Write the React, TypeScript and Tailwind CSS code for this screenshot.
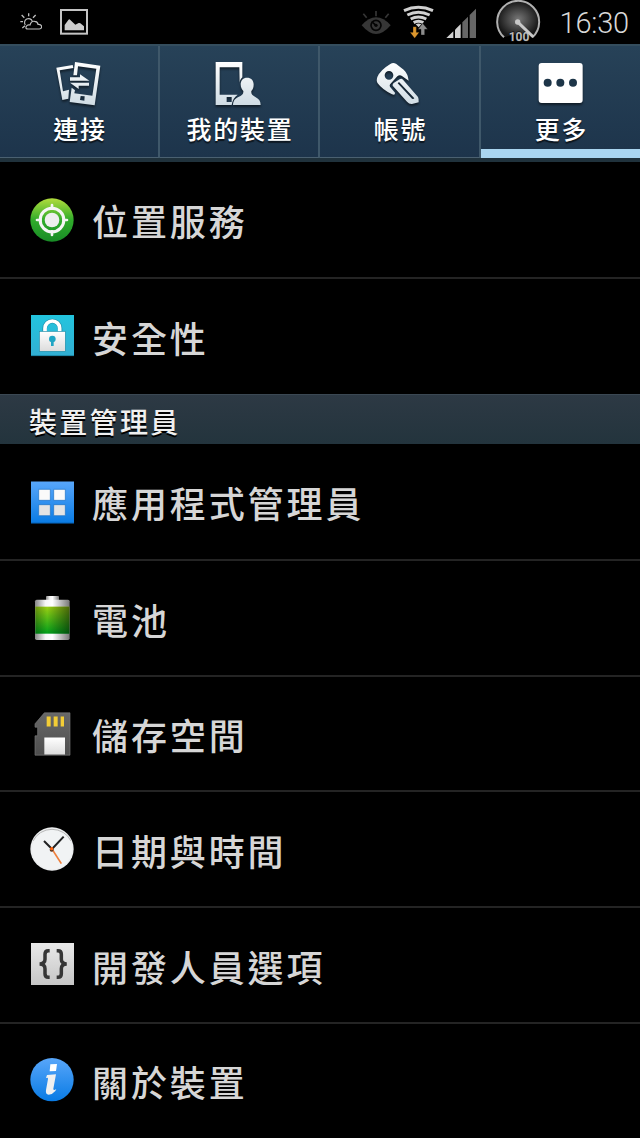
import React from "react";

const cjk = "font-['Noto_Sans_CJK_TC',sans-serif]";

function StatusBar() {
  return (
    <div className="flex h-11 shrink-0 items-center overflow-hidden bg-black pl-5">
      <svg className="h-11 w-[22px]" viewBox="60 0 66 132" fill="none" stroke="#bdbdbd" strokeWidth="3.5">
        <path d="M76 75 A12 12 0 1 1 97 64" />
        <path d="M86 40v9M65 45l8 8M107 45l-8 8M61 65h8M67 84l8-7" strokeWidth="4" />
        <path d="M84 87 Q75 87 79 79 Q82 73 90 75 Q94 62 104 64 Q113 65 114 73 Q124 72 125 80 Q125 87 118 87Z" />
      </svg>
      <svg className="ml-[18px] h-11 w-7" viewBox="180 0 84 132">
        <rect x="183" y="30" width="78" height="71" fill="none" stroke="#c4c4c4" strokeWidth="6" />
        <path d="M194 91V75L205 60q3-4 6 0l15 14 10-5q3-1 5 1l11 9v12z" fill="#cdcdcd" />
      </svg>

      <svg className="ml-[273px] h-11 w-[30px]" viewBox="63 0 90 132" fill="none" stroke="#363636">
        <path d="M70 41l10 12M108 33v16M146 41l-10 12" strokeWidth="5" />
        <path d="M65 76 Q86 52 108 52 Q131 52 152 76 Q130 102 108 102 Q87 102 65 76Z" fill="#363636" stroke="none" />
        <circle cx="108" cy="76" r="15" stroke="#050505" strokeWidth="5" />
        <path d="M95 65l13 11" stroke="#050505" strokeWidth="5" />
        <circle cx="108" cy="76" r="5" fill="#050505" stroke="none" />
      </svg>
      <svg className="ml-[11px] h-11 w-[33px]" viewBox="186 0 99 132">
        <g fill="none" stroke="#d0d0d0" strokeWidth="9">
          <path d="M192 32Q235 12 279 32" />
          <path d="M202 45Q235 29 269 45" />
          <path d="M212 57Q235 45 259 57" />
          <path d="M221 68Q235 60 250 68" />
        </g>
        <path d="M227 73q8-5 17 0l-8 9z" fill="#d0d0d0" />
        <path d="M219 80h10v17h9l-14 18-14-18h9z" fill="#dc962d" stroke="#000" strokeWidth="1" />
        <path d="M243 105h11V88h9l-15-18-14 18h9z" fill="#8c8c8c" stroke="#000" strokeWidth="1" />
      </svg>
      <svg className="ml-[11px] h-11 w-[30px]" viewBox="318 0 90 132">
        <path d="M319 114L340 94V114z" fill="#d2d2d2" />
        <path d="M345 114V89L362 72V114z" fill="#d2d2d2" />
        <path d="M367 114V67L384 50V114zM389 114V45L408 26V114z" fill="#666" />
      </svg>
      <svg className="ml-[19px] h-11 w-[47px]" viewBox="465 0 141 132">
        <defs>
          <radialGradient id="dial">
            <stop offset="0" stopColor="#777" />
            <stop offset="1" stopColor="#171717" />
          </radialGradient>
        </defs>
        <path d="M491 112A63 63 0 1 1 578 112L534 102Z" fill="url(#dial)" />
        <path d="M492 112A63 63 0 1 1 577 112" fill="none" stroke="#b0b0b0" strokeWidth="6" />
        <text x="537" y="123" textAnchor="middle" textLength="62" lengthAdjust="spacingAndGlyphs" className="font-[Roboto]" fontSize="41" fontWeight="700" fill="#bababa" stroke="#111" strokeWidth="4" paintOrder="stroke">
          100
        </text>
        <path d="M534 67L580 111" stroke="#c8c8c8" strokeWidth="9" />
        <circle cx="533" cy="66" r="8" fill="#c8c8c8" />
      </svg>
      <span className="ml-[17.5px] pt-0.5 font-[Roboto,sans-serif] text-[29px] leading-none font-light tracking-[-0.2px] text-[#d8d8d8]">
        16:30
      </span>
    </div>
  );
}

function TabGradient({ id }: { id: string }) {
  return (
    <defs>
      <linearGradient id={id} x1="0" y1="66" x2="0" y2="195" gradientUnits="userSpaceOnUse">
        <stop offset="0" stopColor="#ffffff" />
        <stop offset="1" stopColor="#cfdce4" />
      </linearGradient>
    </defs>
  );
}

const tabIconClass = "mt-2.5 h-[50px] w-12 drop-shadow-[0_2px_1px_rgba(0,0,0,0.5)]";

const tabs = [
  {
    label: "連接",
    icon: (
      <svg className={tabIconClass} viewBox="166 48 144 150" fill="url(#tabA)">
        <TabGradient id="tabA" />
        <path d="M170 83L219 75L221 84L180 91L190 154L208 149L206 176L188 180Z" />
        <path fillRule="evenodd" d="M226 66L302 77L285 196L210 186L216 143L226 151L224 160L278 167L290 86L235 79L232 106L221 106ZM243 168L241 180L254 182L255 169Z" />
        <path d="M211 112H241V103L269 122H211ZM268 128V137H237V147L211 128Z" />
      </svg>
    ),
  },
  {
    label: "我的裝置",
    icon: (
      <svg className={tabIconClass} viewBox="646 48 144 150" fill="url(#tabB)">
        <TabGradient id="tabB" />
        <path fillRule="evenodd" d="M648 66H728V112Q719 120 720 133L719 82H660V164H714Q699 174 696 195H648ZM681 171V186H696V171Z" />
        <path d="M742 113C731 113 723 121 723 133C723 143 727 149 731 153C732 163 727 166 716 171C705 176 701 183 700 195H783C783 183 777 176 767 171C757 166 754 163 755 153C760 149 762 143 762 133C762 121 754 113 742 113Z" />
      </svg>
    ),
  },
  {
    label: "帳號",
    icon: (
      <svg className={tabIconClass} viewBox="168 48 144 150" fill="url(#tabC)">
        <TabGradient id="tabC" />
        <path fillRule="evenodd" d="M211 72Q219 66 228 71L251 89Q264 101 266 122L247 109Q239 103 232 109L213 130Q205 137 213 144L225 158Q226 167 216 163Q187 149 173 130Q168 123 172 111Q181 90 211 72ZM207 93A13 13 0 1 0 207 119A13 13 0 1 0 207 93Z" />
        <path fillRule="evenodd" d="M239 118Q244 114 249 119L294 171Q297 177 296 187L276 192Q268 193 261 185L218 137Q217 132 221 129ZM237 126L233 130L276 176Q280 179 283 175Z" />
      </svg>
    ),
  },
  {
    label: "更多",
    icon: (
      <svg className={tabIconClass} viewBox="648 48 144 150">
        <rect x="653" y="69" width="132" height="120" rx="9" fill="#fff" />
        <g fill="#1d3548">
          <circle cx="680" cy="128" r="12" />
          <circle cx="718" cy="128" r="12" />
          <circle cx="756" cy="128" r="12" />
        </g>
      </svg>
    ),
  },
];

const iconClass = "size-11 shrink-0";

function LocationIcon() {
  return (
    <svg className={iconClass} viewBox="90 54 132 132">
      <defs>
        <linearGradient id="green" x1="0" y1="0" x2="0" y2="1">
          <stop offset="0" stopColor="#b2dc3c" />
          <stop offset="0.5" stopColor="#30ac2b" />
          <stop offset="1" stopColor="#188b26" />
        </linearGradient>
      </defs>
      <circle cx="156" cy="120" r="65" fill="url(#green)" />
      <circle cx="156" cy="120" r="35.5" fill="none" stroke="#f5f5f5" strokeWidth="9" />
      <circle cx="156" cy="120" r="22" fill="#eee" />
      <path d="M156 75v11M156 154v11M111 120h11M190 120h11" stroke="#f5f5f5" strokeWidth="8" strokeLinecap="round" />
    </svg>
  );
}

function LockIcon() {
  return (
    <svg className={iconClass} viewBox="90 405 132 132">
      <defs>
        <linearGradient id="cyan" x1="0" y1="0" x2="0" y2="1">
          <stop offset="0" stopColor="#22c5de" />
          <stop offset="1" stopColor="#32afd3" />
        </linearGradient>
        <linearGradient id="lockBody" x1="0" y1="0" x2="0" y2="1">
          <stop offset="0" stopColor="#fff" />
          <stop offset="1" stopColor="#dcdcdc" />
        </linearGradient>
      </defs>
      <rect x="93" y="403.5" width="129" height="124" fill="url(#cyan)" />
      <path d="M93 527H222" stroke="#1682a2" strokeWidth="2" />
      <path d="M134 456V446a23 23 0 0 1 46 0v10" fill="none" stroke="#218ea8" strokeWidth="14" />
      <path d="M135 456V445a22 22 0 0 1 44 0v11" fill="none" stroke="#fff" strokeWidth="11" />
      <rect x="118" y="454" width="78" height="60" fill="url(#lockBody)" stroke="#218ea8" strokeWidth="2" />
      <circle cx="157" cy="477" r="10" fill="#1fa5c4" />
      <path d="M153 480h8v18h-8z" fill="#1fa5c4" />
    </svg>
  );
}

function AppsIcon() {
  return (
    <svg className={iconClass} viewBox="90 299 132 132">
      <defs>
        <linearGradient id="blue" x1="0" y1="0" x2="0" y2="1">
          <stop offset="0" stopColor="#58a6fa" />
          <stop offset="1" stopColor="#097be4" />
        </linearGradient>
      </defs>
      <rect x="93" y="303.5" width="129" height="125.5" fill="url(#blue)" />
      <path d="M93 428H222" stroke="#0758a5" strokeWidth="2" />
      <g stroke="#1a6fc4" strokeWidth="2">
        <path d="M116 327h35v33h-35zM161 327h35v33h-35z" fill="#fafafa" />
        <path d="M116 373h35v33h-35zM161 373h35v33h-35z" fill="#e4e4e4" />
      </g>
    </svg>
  );
}

function BatteryIcon() {
  return (
    <svg className={iconClass} viewBox="90 48 132 132">
      <defs>
        <linearGradient id="metal">
          <stop offset="0" stopColor="#868686" />
          <stop offset="0.3" stopColor="#f6f6f6" />
          <stop offset="0.5" stopColor="#fff" />
          <stop offset="1" stopColor="#777" />
        </linearGradient>
        <linearGradient id="charge" x1="0" y1="0" x2="0" y2="1">
          <stop offset="0" stopColor="#9bd013" />
          <stop offset="1" stopColor="#00a01b" />
        </linearGradient>
        <linearGradient id="shade">
          <stop offset="0" stopColor="#000" stopOpacity="0.3" />
          <stop offset="0.35" stopColor="#000" stopOpacity="0" />
          <stop offset="1" stopColor="#000" stopOpacity="0.5" />
        </linearGradient>
      </defs>
      <rect x="138" y="48" width="39" height="16" rx="2" fill="url(#metal)" />
      <rect x="105" y="59" width="104" height="121" rx="5" fill="url(#metal)" />
      <rect x="106" y="80" width="102" height="81" fill="url(#charge)" />
      <rect x="106" y="80" width="102" height="81" fill="url(#shade)" />
    </svg>
  );
}

function CardIcon() {
  return (
    <svg className={iconClass} viewBox="90 394.5 132 132">
      <defs>
        <linearGradient id="card" x1="0" y1="0" x2="0" y2="1">
          <stop offset="0" stopColor="#686868" />
          <stop offset="1" stopColor="#4e4e4e" />
        </linearGradient>
      </defs>
      <path d="M133 397H210V524H105V466H113V440H105V430Z" fill="url(#card)" stroke="#777" strokeWidth="2" />
      <path d="M140 408h12v30h-12zM161 408h12v30h-12zM182 408h10v30h-10z" fill="#f3cd36" />
      <rect x="133" y="471" width="62" height="51" fill="url(#lockBody)" />
    </svg>
  );
}

function ClockIcon() {
  return (
    <svg className={iconClass} viewBox="90 51 132 132">
      <circle cx="156" cy="117" r="65" fill="#eceeef" />
      <circle cx="156" cy="118" r="60" fill="#f1f3f4" />
      <path d="M99 93A63 61 0 0 1 213 93" fill="none" stroke="#b8b8b8" strokeWidth="3" />
      <path d="M132 93L156 117L191 80" fill="none" stroke="#222" strokeWidth="6" />
      <path d="M154 114L184 161" stroke="#ef803c" strokeWidth="5" />
      <circle cx="155" cy="119" r="6" fill="#55331f" />
      <circle cx="155" cy="116" r="5" fill="#ff6510" />
    </svg>
  );
}

function BracesIcon() {
  return (
    <svg className={iconClass} viewBox="90 399 132 132">
      <defs>
        <linearGradient id="silver" x1="0" y1="0" x2="0" y2="1">
          <stop offset="0" stopColor="#e9e9e9" />
          <stop offset="1" stopColor="#c6c6c6" />
        </linearGradient>
      </defs>
      <rect x="93" y="399" width="129" height="126" fill="url(#silver)" />
      <g fill="none" stroke="#363636" strokeWidth="10.5">
        <path d="M149 422H145Q135 422 135 433V448Q135 461 119 462Q135 463 135 476V491Q135 502 145 502H149" />
        <path d="M170 422H174Q184 422 184 433V448Q184 461 200 462Q184 463 184 476V491Q184 502 174 502H170" />
      </g>
    </svg>
  );
}

function InfoIcon() {
  return (
    <svg className={iconClass} viewBox="90 144 132 132">
      <circle cx="156" cy="209" r="65" fill="url(#blue)" />
      <path d="M151 163L171 162L168 183L149 184Z" fill="#fff" />
      <path d="M141 195L168 193L160 236Q160 244 169 237L166 243Q158 253 146 254Q136 254 138 240L144 207Q145 201 138 204Z" fill="#f0f0f0" />
    </svg>
  );
}

type RowProps = { icon: React.ReactNode; label: string; className: string };

function Row({ icon, label, className }: RowProps) {
  return (
    <li className={`flex shrink-0 items-center border-[#242424] pl-[30px] ${className}`}>
      {icon}
      <span className={`${cjk} ml-[18px] pt-px text-[36px] leading-[48px] font-medium tracking-[2.9px] text-[#d6d6d6]`}>
        {label}
      </span>
    </li>
  );
}

export default function App() {
  return (
    <div className="flex h-[1138px] w-[640px] flex-col overflow-hidden bg-black">
      <StatusBar />

      <nav className="grid h-[118px] shrink-0 grid-cols-[160px_160px_161px_159px] border-t-2 border-b-4 border-t-[#344d5d] border-b-[#20323c] bg-linear-to-b from-[#274258] to-[#1d344b]">
        {tabs.map((tab, i) => (
          <div
            key={tab.label}
            className={`relative flex flex-col items-center border-b border-b-[#4a6070] ${i < 3 ? "border-r-2 border-r-[#3f586a]" : ""}`}
          >
            {tab.icon}
            <span className={`${cjk} mt-1 pl-0.5 text-[25px] leading-9 font-medium tracking-[1.8px] text-white [text-shadow:0_2px_1px_rgba(0,0,0,0.6)]`}>
              {tab.label}
            </span>
            {i === 3 && <span className="absolute inset-x-0 -bottom-px h-[9px] bg-[#a9d5f0]" />}
          </div>
        ))}
      </nav>

      <ul>
        <Row icon={<LocationIcon />} label="位置服務" className="h-[117px] border-b-2" />
        <Row icon={<LockIcon />} label="安全性" className="h-[115px]" />
      </ul>
      <h2 className={`${cjk} flex h-[50px] shrink-0 items-center border-t border-[#3b4853] bg-linear-to-b from-[#2d3944] to-[#23343d] pt-0.5 pl-[29px] text-[28px] leading-10 font-medium tracking-[2.3px] text-[#f0f0f0] [text-shadow:0_2px_0_#000]`}>
        裝置管理員
      </h2>
      <ul>
        <Row icon={<AppsIcon />} label="應用程式管理員" className="h-[117px] border-b-2" />
        <Row icon={<BatteryIcon />} label="電池" className="h-[116px] border-b-2" />
        <Row icon={<CardIcon />} label="儲存空間" className="h-[115px] border-b-2" />
        <Row icon={<ClockIcon />} label="日期與時間" className="h-[116px] border-b-2" />
        <Row icon={<BracesIcon />} label="開發人員選項" className="h-[116px] border-b-2" />
        <Row icon={<InfoIcon />} label="關於裝置" className="h-[112px]" />
      </ul>
    </div>
  );
}
